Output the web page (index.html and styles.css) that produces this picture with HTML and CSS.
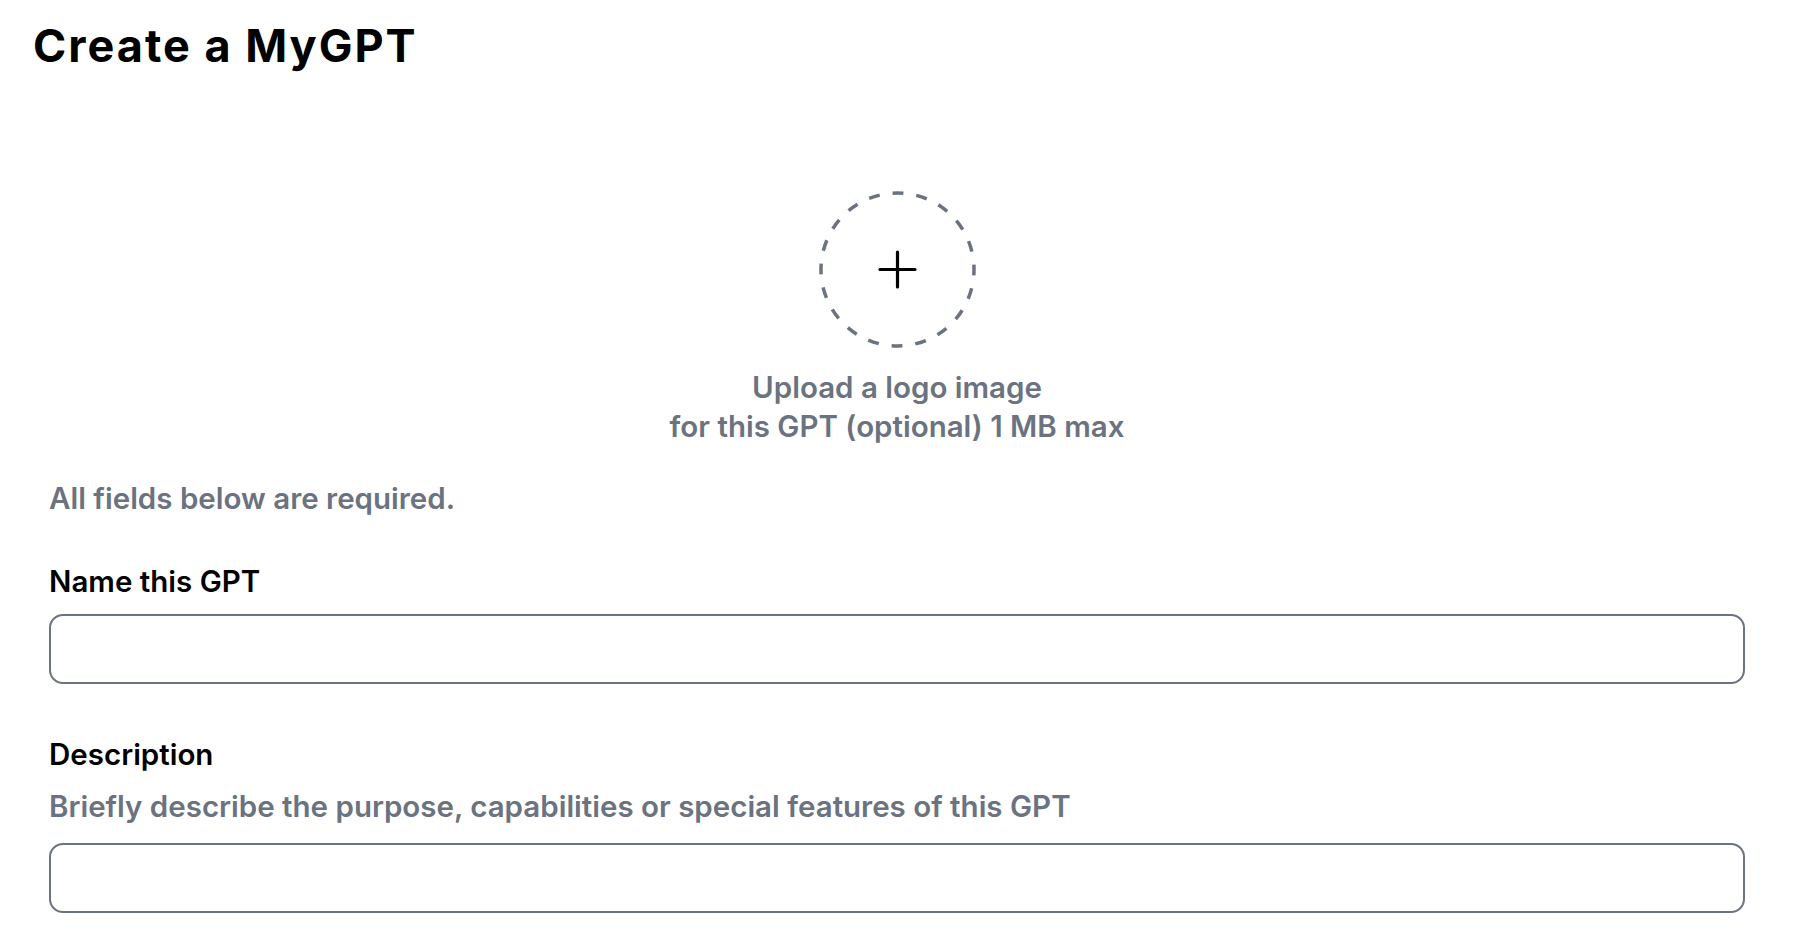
FILE: index.html
```html
<!DOCTYPE html>
<html lang="en">
<head>
    <meta charset="UTF-8">
    <meta name="viewport" content="width=device-width, initial-scale=1.0">
    <title>Create a MyGPT</title>
    <link rel="stylesheet" href="styles.css">
</head>
<body>

<h1 class="page-title">Create a MyGPT</h1>

<div class="upload">
    <button type="button" class="upload-circle" aria-label="Upload a logo image">
        <svg width="157" height="157" viewBox="0 0 157 157">
            <circle cx="78.5" cy="78.5" r="76.5" fill="none" stroke="#6b7280" stroke-width="3.5"
                    pathLength="480" stroke-dasharray="11 13" stroke-dashoffset="5"/>
            <path d="M78.5 61v35M61 78.5h35" stroke="#000" stroke-width="3.2" stroke-linecap="round"/>
        </svg>
    </button>
    <p class="upload-text">Upload a logo image<br>for this GPT (optional) 1 MB max</p>
</div>

<form class="gpt-form">
    <p class="required-note">All fields below are required.</p>

    <label class="field-label name-label" for="gpt_name">Name this GPT</label>
    <input type="text" id="gpt_name" name="gpt_name" class="field-input">

    <label class="field-label desc-label" for="gpt_desc">Description</label>
    <p class="field-hint">Briefly describe the purpose, capabilities or special features of this GPT</p>
    <input type="text" id="gpt_desc" name="gpt_desc" class="field-input">
</form>

</body>
</html>
```

FILE: styles.css
```css
body {
    font-family: Inter, "Open Sans", sans-serif;
    margin: 0;
    padding: 0;
    background-color: #fff;
    color: #000;
}
.page-title {
    font-size: 45px;
    font-weight: 700;
    letter-spacing: 2px;
    line-height: 48px;
    margin: 22px 0 0;
    padding-left: 33px;
}
.upload {
    display: flex;
    flex-direction: column;
    align-items: center;
    margin: 121px 71px 0 49px;
}
.upload-circle {
    display: block;
    width: 157px;
    height: 157px;
    padding: 0;
    border: none;
    background: none;
    cursor: pointer;
}
.upload-circle svg {
    display: block;
}
.upload-text {
    margin: 20px 0 0;
    font-size: 29.5px;
    font-weight: 600;
    line-height: 39px;
    color: #6b7280;
    text-align: center;
}
.gpt-form {
    display: flex;
    flex-direction: column;
    margin: 0 71px 0 49px;
}
.required-note {
    margin: 34px 0 0;
    font-size: 29.5px;
    font-weight: 600;
    line-height: 36px;
    color: #6b7280;
}
.field-label {
    display: block;
    font-size: 29.5px;
    font-weight: 600;
    line-height: 36px;
}
.name-label {
    margin-top: 47px;
}
.desc-label {
    margin-top: 52px;
}
.field-hint {
    margin: 16px 0 0;
    font-size: 29.5px;
    font-weight: 600;
    line-height: 36px;
    color: #6b7280;
}
.field-input {
    box-sizing: border-box;
    width: 100%;
    height: 70px;
    margin-top: 15px;
    padding: 0 20px;
    border: 2px solid #6b7280;
    border-radius: 14px;
    font: inherit;
    font-size: 29.5px;
}
.field-hint + .field-input {
    margin-top: 19px;
}
```
